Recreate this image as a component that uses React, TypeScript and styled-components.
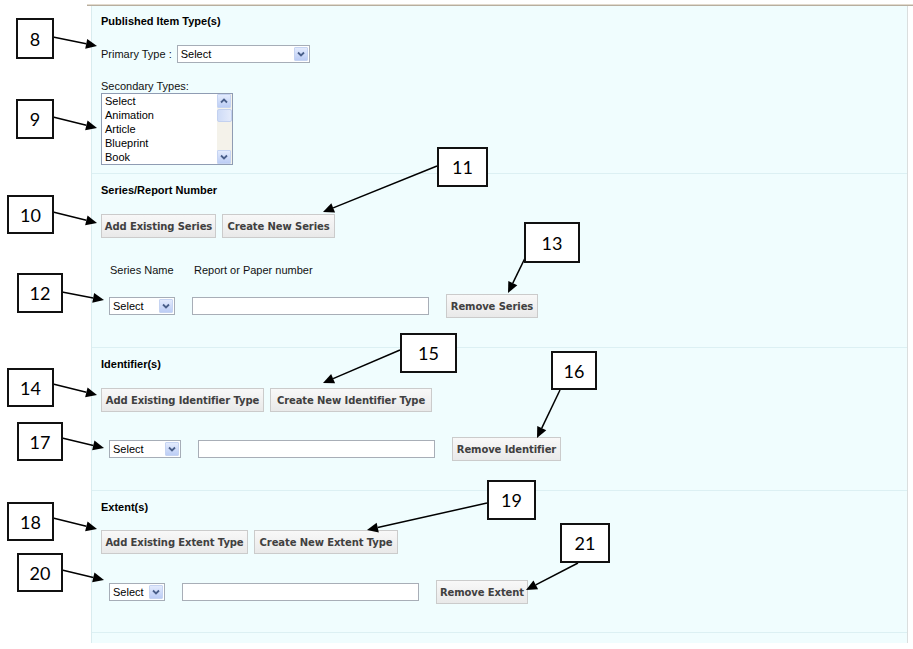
import styled, { createGlobalStyle } from "styled-components";

const GlobalStyle = createGlobalStyle`
  html, body { margin: 0; padding: 0; background: #fff; }
  body { font-family: "Liberation Sans", Arial, sans-serif; }
`;

const Page = styled.div`
  position: relative;
  width: 913px;
  height: 649px;
  overflow: hidden;
  background: #fff;
  padding-top: 4px;
  box-sizing: border-box;
`;

const TopRule = styled.div`
  margin-left: 87px;
  height: 2px;
  background: linear-gradient(#e2dacd 0 1px, #b7ae9f 1px 2px);
`;

const Panel = styled.div`
  margin-left: 91px;
  width: 817px;
  height: 637px;
  box-sizing: border-box;
  background: #f0fdfe;
  border-left: 1px solid #d9ecef;
  border-right: 1px solid #dadede;
`;

const Section = styled.section<{ $pt?: number; $pb: number }>`
  padding: ${(p) => p.$pt ?? 9}px 0 ${(p) => p.$pb}px 9px;
  border-bottom: 1px solid #dcf0f3;
`;

const Heading = styled.div`
  font-size: 11px;
  font-weight: bold;
  line-height: 14px;
  color: #000;
`;

const FieldRow = styled.div`
  display: flex;
  align-items: center;
  gap: 5px;
  margin-top: 17px;
  height: 18px;
  font-size: 11px;
  color: #111;
`;

const Caption = styled.div`
  margin-top: 17px;
  font-size: 11px;
  line-height: 13px;
  color: #111;
`;

const SelectBox = styled.div<{ $w: number }>`
  width: ${(p) => p.$w}px;
  height: 18px;
  box-sizing: border-box;
  display: flex;
  align-items: center;
  background: #fff;
  border: 1px solid #a6adb7;
  font-size: 11px;
  color: #000;
`;

const SelectText = styled.span`
  flex: 1;
  padding-left: 3px;
  line-height: 16px;
`;

const DropButton = styled.span`
  width: 14px;
  height: 14px;
  margin-right: 1px;
  box-sizing: border-box;
  display: flex;
  align-items: center;
  justify-content: center;
  background: linear-gradient(#e3ebfd, #bccdf5);
  border: 1px solid #c6d4f2;
  border-radius: 1px;
`;

const ListBox = styled.div`
  width: 132px;
  height: 72px;
  box-sizing: border-box;
  display: flex;
  background: #fff;
  border: 1px solid #8f9cb3;
`;

const ListItems = styled.div`
  flex: 1;
  padding: 1px 3px 0;
  font-size: 11px;
  line-height: 13.9px;
  color: #000;
  overflow: hidden;
`;

const ScrollBar = styled.div`
  width: 15px;
  display: flex;
  flex-direction: column;
  background: #f4f2ea;
`;

const ScrollThumb = styled.div`
  height: 13px;
  margin: 1px 0;
  box-sizing: border-box;
  background: linear-gradient(90deg, #cfdcf7, #e4ebfb);
  border: 1px solid #c3d1f0;
  border-radius: 2px;
`;

const Spacer = styled.div`
  flex: 1;
`;

const ButtonRow = styled.div<{ $mt: number }>`
  display: flex;
  gap: 6px;
  margin-top: ${(p) => p.$mt}px;
`;

const Button = styled.button<{ $w: number }>`
  width: ${(p) => p.$w}px;
  height: 24px;
  padding: 0;
  box-sizing: border-box;
  border: 1px solid #cbcbcb;
  background: linear-gradient(#f8f8f8, #e9e9e9);
  font-family: "DejaVu Sans", Verdana, sans-serif;
  font-size: 10px;
  font-weight: bold;
  letter-spacing: -0.1px;
  color: #404040;
  text-align: center;
`;

const Row = styled.div<{ $mt: number }>`
  display: flex;
  align-items: center;
  gap: 17px;
  height: 24px;
  margin: ${(p) => p.$mt}px 0 0 8px;
`;

const LabelRow = styled.div`
  display: flex;
  gap: 17px;
  margin: 25px 0 0 8px;
  font-size: 11px;
  line-height: 14px;
  color: #111;
`;

const ColLabel = styled.span<{ $w?: number }>`
  width: ${(p) => (p.$w ? `${p.$w}px` : "auto")};
  padding-left: 1px;
`;

const TextInput = styled.input`
  width: 237px;
  height: 18px;
  box-sizing: border-box;
  margin: 0;
  padding: 0;
  border: 1px solid #a8aeb7;
  background: #fff;
`;

const Callout = styled.div`
  position: absolute;
  box-sizing: border-box;
  display: flex;
  align-items: center;
  justify-content: center;
  background: #fff;
  border: 2px solid #111;
  font-family: Lato, "Open Sans", sans-serif;
  font-size: 18px;
  color: #000;
`;

const ArrowLayer = styled.svg`
  position: absolute;
  left: 0;
  top: 0;
  pointer-events: none;
`;

function Chevron({ up }: { up?: boolean }) {
  return (
    <svg width="8" height="6" viewBox="0 0 8 6">
      <path
        d={up ? "M1 4.5 L4 1.5 L7 4.5" : "M1 1.5 L4 4.5 L7 1.5"}
        fill="none"
        stroke="#4a5f8a"
        strokeWidth="1.8"
      />
    </svg>
  );
}

function Select({ w, value = "Select" }: { w: number; value?: string }) {
  return (
    <SelectBox $w={w}>
      <SelectText>{value}</SelectText>
      <DropButton>
        <Chevron />
      </DropButton>
    </SelectBox>
  );
}

const callouts = [
  { n: "8", x: 16, y: 18, w: 38, h: 41, from: [53, 37], to: [97, 46] },
  { n: "9", x: 16, y: 99, w: 38, h: 40, from: [53, 117], to: [97, 128] },
  { n: "10", x: 7, y: 195, w: 47, h: 39, from: [53, 212], to: [97, 223] },
  { n: "11", x: 437, y: 147, w: 51, h: 40, from: [437, 166], to: [323, 212] },
  { n: "12", x: 17, y: 273, w: 46, h: 40, from: [62, 292], to: [104, 300] },
  { n: "13", x: 524, y: 222, w: 56, h: 41, from: [527, 254], to: [508, 293] },
  { n: "14", x: 7, y: 368, w: 47, h: 39, from: [53, 384], to: [97, 395] },
  { n: "15", x: 400, y: 333, w: 57, h: 40, from: [400, 350], to: [323, 383] },
  { n: "16", x: 551, y: 351, w: 46, h: 39, from: [560, 390], to: [537, 438] },
  { n: "17", x: 17, y: 422, w: 46, h: 39, from: [62, 438], to: [104, 448] },
  { n: "18", x: 7, y: 502, w: 47, h: 39, from: [53, 518], to: [97, 529] },
  { n: "19", x: 487, y: 480, w: 49, h: 40, from: [487, 503], to: [367, 530] },
  { n: "20", x: 17, y: 553, w: 46, h: 39, from: [62, 570], to: [104, 580] },
  { n: "21", x: 560, y: 523, w: 50, h: 40, from: [578, 563], to: [526, 590] },
];

function Arrow({ from, to }: { from: number[]; to: number[] }) {
  const [x1, y1] = from;
  const [x2, y2] = to;
  const len = Math.hypot(x2 - x1, y2 - y1);
  const ux = (x2 - x1) / len;
  const uy = (y2 - y1) / len;
  const bx = x2 - ux * 11;
  const by = y2 - uy * 11;
  const nx = -uy * 5;
  const ny = ux * 5;
  return (
    <g>
      <line x1={x1} y1={y1} x2={bx} y2={by} stroke="#000" strokeWidth="1.5" />
      <polygon
        points={`${x2},${y2} ${bx + nx},${by + ny} ${bx - nx},${by - ny}`}
        fill="#000"
      />
    </g>
  );
}

export default function App() {
  return (
    <Page>
      <GlobalStyle />
      <TopRule />
      <Panel>
        <Section $pt={8} $pb={8}>
          <Heading>Published Item Type(s)</Heading>
          <FieldRow>
            Primary Type :
            <Select w={133} />
          </FieldRow>
          <Caption>Secondary Types:</Caption>
          <ListBox>
            <ListItems>
              <div>Select</div>
              <div>Animation</div>
              <div>Article</div>
              <div>Blueprint</div>
              <div>Book</div>
            </ListItems>
            <ScrollBar>
              <DropButton>
                <Chevron up />
              </DropButton>
              <ScrollThumb />
              <Spacer />
              <DropButton>
                <Chevron />
              </DropButton>
            </ScrollBar>
          </ListBox>
        </Section>

        <Section $pb={29}>
          <Heading>Series/Report Number</Heading>
          <ButtonRow $mt={17}>
            <Button $w={115}>Add Existing Series</Button>
            <Button $w={113}>Create New Series</Button>
          </ButtonRow>
          <LabelRow>
            <ColLabel $w={66}>Series Name</ColLabel>
            <ColLabel>Report or Paper number</ColLabel>
          </LabelRow>
          <Row $mt={17}>
            <Select w={66} />
            <TextInput />
            <Button $w={92}>Remove Series</Button>
          </Row>
        </Section>

        <Section $pb={29}>
          <Heading>Identifier(s)</Heading>
          <ButtonRow $mt={17}>
            <Button $w={163}>Add Existing Identifier Type</Button>
            <Button $w={162}>Create New Identifier Type</Button>
          </ButtonRow>
          <Row $mt={25}>
            <Select w={72} />
            <TextInput />
            <Button $w={109}>Remove Identifier</Button>
          </Row>
        </Section>

        <Section $pb={28}>
          <Heading>Extent(s)</Heading>
          <ButtonRow $mt={16}>
            <Button $w={147}>Add Existing Extent Type</Button>
            <Button $w={144}>Create New Extent Type</Button>
          </ButtonRow>
          <Row $mt={26}>
            <Select w={56} />
            <TextInput />
            <Button $w={92}>Remove Extent</Button>
          </Row>
        </Section>
      </Panel>

      <ArrowLayer width="913" height="649" viewBox="0 0 913 649">
        {callouts.map((c) => (
          <Arrow key={c.n} from={c.from} to={c.to} />
        ))}
      </ArrowLayer>
      {callouts.map((c) => (
        <Callout
          key={c.n}
          style={{ left: c.x, top: c.y, width: c.w, height: c.h }}
        >
          {c.n}
        </Callout>
      ))}
    </Page>
  );
}
